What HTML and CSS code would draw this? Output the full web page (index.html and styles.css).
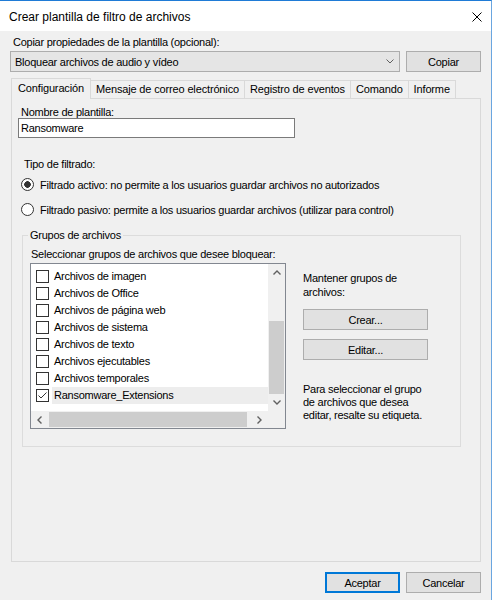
FILE: index.html
```html
<!DOCTYPE html>
<html lang="es">
<head>
<meta charset="utf-8">
<title>Crear plantilla de filtro de archivos</title>
<link rel="stylesheet" href="styles.css">
</head>
<body>
<div class="window">
  <div class="titlebar">
    <span class="title">Crear plantilla de filtro de archivos</span>
    <svg class="close" viewBox="0 0 10 10"><path d="M0.5 0.5L9.5 9.5M9.5 0.5L0.5 9.5" stroke="#000" stroke-width="1" fill="none"/></svg>
  </div>
  <div class="main">
    <div class="lbl copy-lbl">Copiar propiedades de la plantilla (opcional):</div>
    <div class="copy-row">
      <div class="combo">
        <span>Bloquear archivos de audio y vídeo</span>
        <svg class="chev" viewBox="0 0 8 5"><polyline points="0.5,0.5 4,4 7.5,0.5" stroke="#606060" stroke-width="1" fill="none"/></svg>
      </div>
      <button class="btn copy-btn">Copiar</button>
    </div>
    <div class="tabs">
      <div class="tab active">Configuración</div>
      <div class="tab">Mensaje de correo electrónico</div>
      <div class="tab">Registro de eventos</div>
      <div class="tab">Comando</div>
      <div class="tab">Informe</div>
    </div>
    <div class="panel">
      <div class="lbl name-lbl">Nombre de plantilla:</div>
      <div class="textbox">Ransomware</div>
      <div class="lbl type-lbl">Tipo de filtrado:</div>
      <div class="radio-row first"><span class="radio checked"></span><span>Filtrado activo: no permite a los usuarios guardar archivos no autorizados</span></div>
      <div class="radio-row second"><span class="radio"></span><span>Filtrado pasivo: permite a los usuarios guardar archivos (utilizar para control)</span></div>
      <fieldset class="group">
        <legend>Grupos de archivos</legend>
        <div class="lbl sel-lbl">Seleccionar grupos de archivos que desee bloquear:</div>
        <div class="group-body">
          <div class="listbox">
            <div class="list-main">
              <div class="list-items">
                <div class="item"><span class="cb"></span><span class="itxt">Archivos de imagen</span></div>
                <div class="item"><span class="cb"></span><span class="itxt">Archivos de Office</span></div>
                <div class="item"><span class="cb"></span><span class="itxt">Archivos de página web</span></div>
                <div class="item"><span class="cb"></span><span class="itxt">Archivos de sistema</span></div>
                <div class="item"><span class="cb"></span><span class="itxt">Archivos de texto</span></div>
                <div class="item"><span class="cb"></span><span class="itxt">Archivos ejecutables</span></div>
                <div class="item"><span class="cb"></span><span class="itxt">Archivos temporales</span></div>
                <div class="item sel"><span class="cb"><svg viewBox="0 0 11 11"><polyline points="1.5,5.5 4,8 9.5,2.5" stroke="#333" stroke-width="1" fill="none"/></svg></span><span class="itxt">Ransomware_Extensions</span></div>
              </div>
              <div class="vscroll">
                <div class="arrow"><svg viewBox="0 0 8 5"><polyline points="0.5,4.5 4,1 7.5,4.5" stroke="#606060" stroke-width="1.4" fill="none"/></svg></div>
                <div class="vtrack"><div class="vthumb"></div></div>
                <div class="arrow"><svg viewBox="0 0 8 5"><polyline points="0.5,0.5 4,4 7.5,0.5" stroke="#606060" stroke-width="1.4" fill="none"/></svg></div>
              </div>
            </div>
            <div class="hscroll-row">
              <div class="hscroll">
                <div class="arrow"><svg class="h" viewBox="0 0 5 8"><polyline points="4.5,0.5 1,4 4.5,7.5" stroke="#606060" stroke-width="1.4" fill="none"/></svg></div>
                <div class="htrack"><div class="hthumb"></div></div>
                <div class="arrow"><svg class="h" viewBox="0 0 5 8"><polyline points="0.5,0.5 4,4 0.5,7.5" stroke="#606060" stroke-width="1.4" fill="none"/></svg></div>
              </div>
              <div class="corner"></div>
            </div>
          </div>
          <div class="side">
            <div class="side-text">Mantener grupos de<br>archivos:</div>
            <button class="btn side-btn crear">Crear...</button>
            <button class="btn side-btn editar">Editar...</button>
            <div class="side-help">Para seleccionar el grupo<br>de archivos que desea<br>editar, resalte su etiqueta.</div>
          </div>
        </div>
      </fieldset>
    </div>
    <div class="footer">
      <button class="btn foot-btn default">Aceptar</button>
      <button class="btn foot-btn">Cancelar</button>
    </div>
  </div>
</div>
</body>
</html>
```
FILE: styles.css
```css
* { box-sizing: border-box; }
html, body { margin: 0; padding: 0; }
body {
  background: #ffffff;
  font-family: "Liberation Sans", Arial, sans-serif;
  font-size: 11px;
  letter-spacing: -0.25px;
  color: #000;
}
.window {
  width: 492px;
  height: 600px;
  border-top: 1px solid #1f7bd6;
  border-right: 1px solid #6aa6e0;
  background: #f0f0f0;
  display: flex;
  flex-direction: column;
  overflow: hidden;
}
.titlebar {
  height: 30px;
  flex: none;
  background: #fff;
  display: flex;
  align-items: center;
  justify-content: space-between;
  padding: 1px 9px 0 9px;
}
.title { font-size: 12px; letter-spacing: 0; }
.close { width: 10px; height: 10px; display: block; }
.main {
  flex: 1;
  padding: 0 10px;
  display: flex;
  flex-direction: column;
}
.lbl { height: 13px; line-height: 13px; white-space: nowrap; }
.copy-lbl { margin-top: 5px; padding-left: 3px; }
.copy-row { margin-top: 2px; height: 21px; display: flex; gap: 6px; }
.combo {
  flex: 1;
  background: #e5e5e5;
  border: 1px solid #adadad;
  display: flex;
  align-items: center;
  justify-content: space-between;
  padding: 0 5px 0 4px;
}
.chev { width: 8px; height: 5px; display: block; }
.btn {
  font: inherit;
  letter-spacing: inherit;
  color: #000;
  background: #e1e1e1;
  border: 1px solid #adadad;
  padding: 0;
  margin: 0;
  display: flex;
  align-items: center;
  justify-content: center;
}
.copy-btn { width: 75px; }
.tabs {
  margin-top: 6px;
  margin-left: 1px;
  height: 20px;
  display: flex;
  align-items: flex-end;
  position: relative;
  z-index: 1;
}
.tab {
  height: 18px;
  line-height: 16px;
  padding: 0 5px;
  border: 1px solid #d9d9d9;
  border-bottom: none;
  background: #f0f0f0;
  margin-left: -1px;
  white-space: nowrap;
  letter-spacing: -0.15px;
}
.tab.active {
  height: 21px;
  line-height: 18px;
  margin-bottom: -1px;
  margin-left: 0;
  padding: 0 6px;
}
.panel {
  margin-left: 1px;
  height: 464px;
  border: 1px solid #d9d9d9;
  background: #f0f0f0;
  padding: 0 6px;
  display: flex;
  flex-direction: column;
  align-items: flex-start;
}
.name-lbl { margin-top: 7px; padding-left: 3px; height: 12px; line-height: 12px; }
.textbox {
  width: 277px;
  height: 20px;
  background: #fff;
  border: 1px solid #7a7a7a;
  padding-left: 2px;
  line-height: 18px;
}
.type-lbl { margin-top: 20px; padding-left: 6px; }
.radio-row {
  height: 17px;
  display: flex;
  align-items: center;
  gap: 6px;
  padding-left: 3px;
  white-space: nowrap;
}
.radio-row.first { margin-top: 5px; }
.radio-row.second { margin-top: 8px; }
.radio {
  width: 13px;
  height: 13px;
  flex: none;
  border: 1px solid #333;
  border-radius: 50%;
  background: #fff;
}
.radio.checked { background: radial-gradient(circle, #333 0 3px, #fff 3.6px); }
.group {
  margin: 11px 0 0 4px;
  width: 439px;
  min-width: 0;
  border: 1px solid #dcdcdc;
  padding: 0 0 17px 7px;
}
.group legend {
  padding: 0 2px;
  margin-left: -2px;
  line-height: 13px;
}
.sel-lbl { margin-top: 6px; padding-left: 1px; }
.group-body { margin-top: 2px; display: flex; gap: 17px; }
.listbox {
  width: 256px;
  height: 166px;
  flex: none;
  background: #fff;
  border: 1px solid #828790;
  display: flex;
  flex-direction: column;
}
.list-main { flex: 1; display: flex; min-height: 0; }
.list-items { flex: 1; padding-top: 4px; overflow: hidden; }
.item {
  height: 17px;
  display: flex;
  align-items: center;
  padding-left: 5px;
  gap: 3px;
  white-space: nowrap;
}
.cb {
  width: 13px;
  height: 13px;
  flex: none;
  border: 1px solid #333;
  background: #fff;
}
.cb svg { width: 11px; height: 11px; display: block; }
.itxt { flex: 1; height: 17px; line-height: 17px; padding-left: 2px; }
.item.sel .itxt { background: #ededed; }
.vscroll {
  width: 17px;
  flex: none;
  background: #f0f0f0;
  display: flex;
  flex-direction: column;
}
.arrow {
  width: 17px;
  height: 17px;
  flex: none;
  display: flex;
  align-items: center;
  justify-content: center;
}
.arrow svg { width: 8px; height: 5px; display: block; }
.arrow svg.h { width: 5px; height: 8px; }
.vtrack { flex: 1; display: flex; flex-direction: column; justify-content: flex-end; }
.vthumb { height: 73px; margin: 0 1px; background: #cdcdcd; }
.hscroll-row { height: 17px; flex: none; display: flex; }
.hscroll { flex: 1; background: #f0f0f0; display: flex; }
.htrack { flex: 1; display: flex; align-items: stretch; }
.hthumb { width: 198px; margin: 1px 0 1px 1px; background: #cdcdcd; }
.corner { width: 17px; flex: none; background: #f0f0f0; }
.side { padding-top: 8px; display: flex; flex-direction: column; }
.side-text { line-height: 14px; }
.side-btn { width: 125px; height: 21px; }
.crear { margin-top: 10px; }
.editar { margin-top: 9px; }
.side-help { margin-top: 23px; line-height: 13px; white-space: nowrap; }
.footer {
  margin-top: 10px;
  display: flex;
  justify-content: flex-end;
  gap: 6px;
}
.foot-btn { width: 75px; height: 21px; }
.foot-btn.default { border-color: #0078d7; box-shadow: inset 0 0 0 1px #0078d7; }
```
